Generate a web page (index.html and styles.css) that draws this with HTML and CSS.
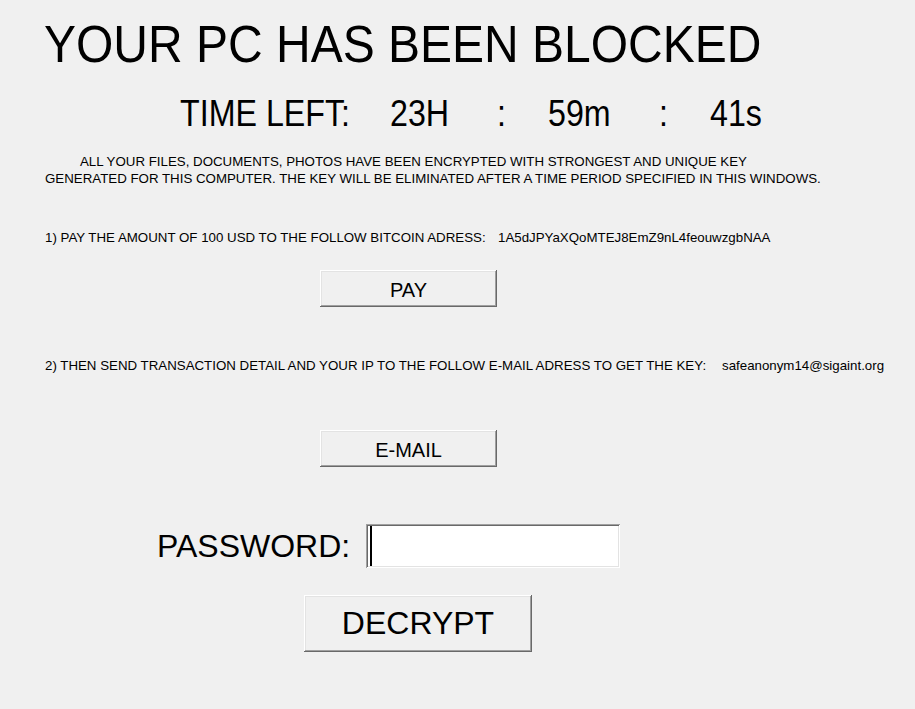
FILE: index.html
```html
<!DOCTYPE html>
<html>
<head>
<meta charset="utf-8">
<title>Blocked</title>
<link rel="stylesheet" href="styles.css">
</head>
<body>
<div class="screen">
  <h1 class="title"><span class="narrow narrow-title">YOUR PC HAS BEEN BLOCKED</span></h1>
  <div class="timer">
    <span class="narrow">TIME LEFT:</span>
    <span class="narrow">23H</span>
    <span class="narrow">:</span>
    <span class="narrow">59m</span>
    <span class="narrow">:</span>
    <span class="narrow">41s</span>
  </div>
  <p class="notice">
    <span class="indent">ALL YOUR FILES, DOCUMENTS, PHOTOS HAVE BEEN ENCRYPTED WITH STRONGEST AND UNIQUE KEY</span><br>
    GENERATED FOR THIS COMPUTER. THE KEY WILL BE ELIMINATED AFTER A TIME PERIOD SPECIFIED IN THIS WINDOWS.
  </p>
  <div class="step step-one">
    <span>1) PAY THE AMOUNT OF 100 USD TO THE FOLLOW BITCOIN ADRESS:</span>
    <span>1A5dJPYaXQoMTEJ8EmZ9nL4feouwzgbNAA</span>
  </div>
  <button class="btn btn-small btn-pay">PAY</button>
  <div class="step step-two">
    <span>2) THEN SEND TRANSACTION DETAIL AND YOUR IP TO THE FOLLOW E-MAIL ADRESS TO GET THE KEY:</span>
    <span>safeanonym14@sigaint.org</span>
  </div>
  <button class="btn btn-small btn-mail">E-MAIL</button>
  <div class="password-row">
    <label class="password-label" for="pw">PASSWORD:</label>
    <div class="password-input" id="pw"></div>
  </div>
  <button class="btn btn-decrypt">DECRYPT</button>
</div>
</body>
</html>
```

FILE: styles.css
```css
html, body {
  margin: 0;
  padding: 0;
  background: #f0f0f0;
}

body {
  font-family: "Liberation Sans", Arial, sans-serif;
  color: #000;
  width: 915px;
  height: 709px;
  overflow: hidden;
}

.screen {
  padding: 18px 0 0 45px;
  display: flex;
  flex-direction: column;
  align-items: flex-start;
}

.narrow {
  display: inline-block;
  transform: scaleX(0.895);
  transform-origin: left center;
  white-space: nowrap;
}

.narrow-title {
  transform: scaleX(0.923);
}

.title {
  margin: 0 0 0 -1px;
  font-size: 52px;
  line-height: 52px;
  font-weight: normal;
  white-space: nowrap;
}

.timer {
  margin-top: 26px;
  margin-left: 135px;
  display: grid;
  grid-template-columns: 210px 107px 51px 111px 51px auto;
  font-size: 36px;
  line-height: 36px;
}

.notice {
  margin: 21px 0 0 0;
  font-size: 13.3px;
  line-height: 17px;
  white-space: nowrap;
}

.notice .indent {
  padding-left: 35px;
}

.step {
  display: grid;
  font-size: 13.3px;
  line-height: 17px;
  white-space: nowrap;
}

.step-one {
  margin-top: 42px;
  grid-template-columns: 453px auto;
}

.step-two {
  margin-top: 50px;
  grid-template-columns: 677px auto;
}

.btn {
  font-family: "Liberation Sans", Arial, sans-serif;
  color: #000;
  background: #f0f0f0;
  border: none;
  padding: 0;
  box-shadow:
    inset -1px -1px 0 #696969,
    inset 1px 1px 0 #ffffff,
    inset -2px -2px 0 #a0a0a0,
    inset 2px 2px 0 #e3e3e3;
}

.btn-small {
  width: 177px;
  height: 37px;
  margin-left: 275px;
  padding-top: 3px;
  font-size: 20px;
}

.btn-pay {
  margin-top: 24px;
}

.btn-mail {
  margin-top: 56px;
}

.password-row {
  margin-top: 57px;
  margin-left: 112px;
  display: flex;
  align-items: center;
}

.password-label {
  font-size: 32px;
  line-height: 36px;
  width: 209px;
}

.password-input {
  width: 254px;
  height: 44px;
  box-sizing: border-box;
  background: #fff;
  box-shadow:
    inset 1px 1px 0 #a0a0a0,
    inset -1px -1px 0 #ffffff,
    inset 2px 2px 0 #696969,
    inset -2px -2px 0 #e3e3e3,
    inset 4px 0 0 #fff,
    inset 6px 0 0 #000;
}

.btn-decrypt {
  margin-top: 27px;
  margin-left: 259px;
  width: 228px;
  height: 57px;
  font-size: 32px;
}
```
